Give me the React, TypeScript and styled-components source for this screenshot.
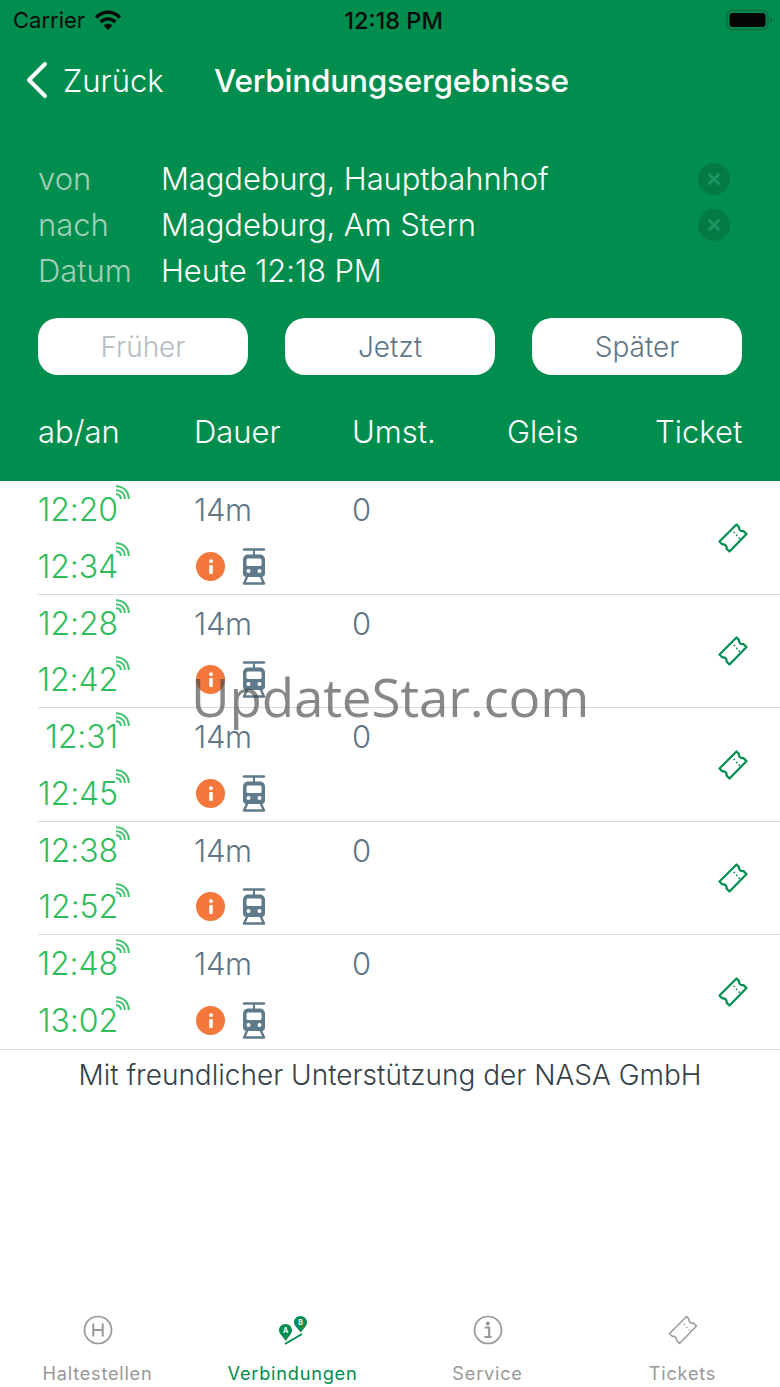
import styled, { createGlobalStyle } from "styled-components";
import { ReactNode } from "react";

const GlobalStyle = createGlobalStyle`
  html, body {
    margin: 0;
    padding: 0;
    background: #fff;
  }
  * {
    box-sizing: border-box;
  }
  body {
    font-family: Inter, "Liberation Sans", sans-serif;
  }
`;

const Page = styled.div`
  position: relative;
  width: 780px;
  height: 1387px;
  display: flex;
  flex-direction: column;
  overflow: hidden;
`;

const Header = styled.header`
  height: 481px;
  flex: none;
  background: #008e4f;
  display: flex;
  flex-direction: column;
`;

const StatusBar = styled.div`
  height: 40px;
  padding: 0 6px 0 13px;
  display: grid;
  grid-template-columns: 1fr auto 1fr;
  align-items: center;
  color: #0a0a0a;
  font-size: 22px;
`;

const StatusLeft = styled.div`
  display: flex;
  align-items: center;
  gap: 9px;
`;

const StatusTime = styled.div`
  font-weight: 500;
  font-size: 23.5px;
`;

const Battery = styled.div`
  justify-self: end;
  display: flex;
  align-items: center;
`;

const NavBar = styled.div`
  height: 80px;
  display: flex;
  align-items: center;
  padding-left: 25px;
  color: #fff;
`;

const BackLabel = styled.span`
  font-size: 31px;
  margin-left: 14px;
  width: 151px;
  font-weight: 300;
`;

const Title = styled.h1`
  margin: 0;
  font-size: 31.5px;
  font-weight: 500;
  letter-spacing: -0.2px;
`;

const SearchInfo = styled.div`
  padding: 36px 50px 0 38px;
  display: flex;
  flex-direction: column;
`;

const InfoRow = styled.div`
  height: 45.7px;
  display: flex;
  align-items: center;
  font-size: 31px;
  font-weight: 300;
  color: #fff;
`;

const InfoLabel = styled.span`
  width: 123px;
  color: #a3cfb9;
`;

const InfoValue = styled.span`
  flex: 1;
  letter-spacing: -0.1px;
`;

const ClearButton = styled.span`
  width: 32px;
  height: 32px;
  border-radius: 50%;
  background: #037a43;
  display: flex;
  align-items: center;
  justify-content: center;
`;

const ButtonRow = styled.div`
  padding: 25px 38px 0;
  display: flex;
  justify-content: space-between;
`;

const TimeButton = styled.button<{ $disabled?: boolean }>`
  width: 210px;
  height: 57px;
  border: none;
  border-radius: 20px;
  background: #fff;
  font-family: inherit;
  font-size: 28px;
  font-weight: 300;
  color: ${(p) => (p.$disabled ? "#b4bdc3" : "#5f7686")};
`;

const ColumnHeads = styled.div`
  padding: 0 38px;
  margin-top: 38px;
  display: flex;
  justify-content: space-between;
  color: #fff;
  font-size: 31px;
  font-weight: 300;
`;

const ColumnHead = styled.span<{ $w: number }>`
  width: ${(p) => p.$w}px;
  flex: none;
`;

const List = styled.div`
  border-bottom: 1px solid #d9d9d9;
`;

const Row = styled.div`
  height: 113.5px;
  margin-left: 38px;
  display: grid;
  grid-template-columns: 156px 158px 1fr 62px;
  grid-template-rows: 57px 56px;
  border-bottom: 1px solid #d9d9d9;

  &:last-child {
    border-bottom: none;
  }
`;

const TimeCell = styled.div`
  grid-column: 1;
  width: 80px;
  position: relative;
  display: flex;
  align-items: center;
  justify-content: flex-end;
  font-size: 32px;
  font-weight: 300;
  color: #2fbd5c;
  letter-spacing: -0.1px;
`;

const Live = styled.span`
  position: absolute;
  right: -12px;
  top: 4px;
  display: flex;
`;

const Duration = styled.div`
  display: flex;
  align-items: center;
  font-size: 31px;
  font-weight: 300;
  color: #5f7686;
  letter-spacing: -0.3px;
`;

const IconCell = styled.div`
  display: flex;
  align-items: center;
  padding-left: 2px;
  gap: 16px;
`;

const TicketCell = styled.div`
  grid-column: 4;
  grid-row: 1 / 3;
  display: flex;
  align-items: center;
`;

const InfoDot = styled.span`
  width: 29px;
  height: 29px;
  border-radius: 50%;
  background: #f4783c;
  display: flex;
  align-items: center;
  justify-content: center;
`;

const Credit = styled.p`
  margin: 8px 0 0;
  text-align: center;
  font-size: 28px;
  font-weight: 300;
  color: #36424a;
`;

const TabBar = styled.nav`
  margin-top: auto;
  height: 87px;
  display: grid;
  grid-template-columns: repeat(4, 1fr);
`;

const Tab = styled.div<{ $active?: boolean }>`
  display: flex;
  flex-direction: column;
  align-items: center;
  color: ${(p) => (p.$active ? "#008e4f" : "#989898")};
`;

const TabIcon = styled.div`
  height: 60px;
  margin-bottom: 2px;
  display: flex;
  align-items: center;
  justify-content: center;
`;

const TabLabel = styled.span`
  font-size: 18.2px;
  font-weight: 400;
  letter-spacing: 0.75px;
  line-height: 22px;
`;

const Watermark = styled.div`
  position: absolute;
  left: 191px;
  top: 662px;
  font-family: "Open Sans", sans-serif;
  font-size: 53px;
  line-height: 70px;
  letter-spacing: -0.2px;
  color: rgba(70, 70, 70, 0.65);
  pointer-events: none;
`;

function WifiIcon() {
  return (
    <svg width="28" height="22" viewBox="0 0 28 22" fill="none" stroke="#0a0a0a" strokeWidth="3.4">
      <path d="M2 8.5C9 1.5 19 1.500 26 8.500" />
      <path d="M6.600 13C11 8.800 17 8.800 21.400 13" />
      <path d="M14 21l-4.400-4.600c2.500-2.200 6.300-2.200 8.800 0z" fill="#0a0a0a" stroke="none" />
    </svg>
  );
}

function BatteryIcon() {
  return (
    <svg width="48" height="22" viewBox="0 0 48 22">
      <rect x="1" y="1.500" width="41" height="19" rx="5" fill="none" stroke="#0b6e3f" strokeWidth="1.600" />
      <rect x="3.500" y="4" width="36" height="14" rx="3" fill="#050505" />
      <path d="M44 8c1.600.4 2.400 1.600 2.400 3S45.600 13.600 44 14z" fill="#0b6e3f" />
    </svg>
  );
}

function BackChevron() {
  return (
    <svg width="24" height="38" viewBox="0 0 24 38" fill="none" stroke="#fff" strokeWidth="4" strokeLinecap="round" strokeLinejoin="round">
      <path d="M20 3L4 19l16 16" />
    </svg>
  );
}

function ClearIcon() {
  return (
    <svg width="14" height="14" viewBox="0 0 14 14" stroke="#1a9460" strokeWidth="3" strokeLinecap="round">
      <path d="M2.500 2.500l9 9M11.500 2.500l-9 9" />
    </svg>
  );
}

function LiveIcon() {
  return (
    <svg width="15" height="15" viewBox="0 0 15 15" fill="none" stroke="#45c46f" strokeWidth="2.100">
      <path d="M1 1.200C8.500 1.200 13.800 6.500 13.800 14" />
      <path d="M1 5.200C6.300 5.200 9.800 8.700 9.800 14" />
      <path d="M1 9.200C4 9.200 5.800 11 5.800 14" />
    </svg>
  );
}

function DotInfo() {
  return (
    <svg width="6" height="15" viewBox="0 0 6 15" fill="#fff">
      <circle cx="3" cy="2.200" r="1.900" />
      <rect x="1.200" y="6" width="3.600" height="9" rx="1" />
    </svg>
  );
}

function TramIcon() {
  return (
    <svg width="26" height="37" viewBox="0 0 26 37" fill="#5f7a8a">
      <path d="M3 1.500h20" stroke="#5f7a8a" strokeWidth="2.400" strokeLinecap="round" />
      <path d="M13 2v5" stroke="#5f7a8a" strokeWidth="2" />
      <path d="M8 6.500h10c4 0 6 2 6 5.500v13.500c0 2-1.500 3.500-3.500 3.500h-15C3.500 29 2 27.500 2 25.500V12c0-3.500 2-5.500 6-5.500z" />
      <rect x="5.500" y="10.500" width="15" height="7.500" rx="1.500" fill="#fff" />
      <circle cx="7.500" cy="23" r="2" fill="#fff" />
      <circle cx="18.500" cy="23" r="2" fill="#fff" />
      <path d="M6 29l-3 6.500M20 29l3 6.500M3 35.500h20" stroke="#5f7a8a" strokeWidth="2.400" strokeLinecap="round" fill="none" />
    </svg>
  );
}

function TicketIcon({ color, width }: { color: string; width: number }) {
  return (
    <svg width="30" height="30" viewBox="0 0 30 30" fill="none" stroke={color} strokeWidth={width} strokeLinejoin="round">
      <path d="M18.500 1.500l2.500 2.500c-.6 2.400 2 4.800 4.400 4l3.100 3.100L11.500 28.500l-3-3c.7-2.300-1.700-4.700-4-4L1.500 18.500z" />
      <path d="M15.800 9l1 1M18.300 11.800l1 1M20.800 14.600l1 1" strokeWidth={width * 0.8} />
    </svg>
  );
}

function StopIcon() {
  return (
    <svg width="30" height="30" viewBox="0 0 30 30" fill="none" stroke="#989898" strokeWidth="1.700">
      <circle cx="15" cy="15" r="13.500" />
      <path d="M10.300 8.500v13M19.700 8.500v13M10.300 15h9.400" strokeWidth="2" />
    </svg>
  );
}

function ConnectionIcon() {
  return (
    <svg width="32" height="30" viewBox="0 0 32 30">
      <path d="M8.500 9c3.600 0 6.500 2.800 6.500 6.200 0 3.900-4 6.600-6.200 10.800-2.300-4.200-6.800-6.900-6.800-10.800C2 11.800 5 9 8.500 9z" fill="#008e4f" />
      <path d="M23.500 1c3.600 0 6.500 2.800 6.500 6.200 0 3.900-4 6.600-6.200 10.300-2.300-3.700-6.800-6.400-6.800-10.300C17 3.800 20 1 23.500 1z" fill="#008e4f" />
      <path d="M8 29l17-10" stroke="#008e4f" strokeWidth="2" fill="none" />
      <text x="8.500" y="18" fontSize="7" fontWeight="700" fill="#fff" textAnchor="middle" fontFamily="Inter, sans-serif">A</text>
      <text x="23.500" y="10" fontSize="7" fontWeight="700" fill="#fff" textAnchor="middle" fontFamily="Inter, sans-serif">B</text>
    </svg>
  );
}

function ServiceIcon() {
  return (
    <svg width="30" height="30" viewBox="0 0 30 30" fill="none" stroke="#989898" strokeWidth="1.700">
      <circle cx="15" cy="15" r="13.500" />
      <circle cx="14.800" cy="8.500" r="2" fill="#989898" stroke="none" />
      <path d="M11.800 12.500h4.400v9M11.500 22h7" strokeWidth="2.200" />
    </svg>
  );
}

type Connection = { from: string; to: string };

const connections: Connection[] = [
  { from: "12:20", to: "12:34" },
  { from: "12:28", to: "12:42" },
  { from: "12:31", to: "12:45" },
  { from: "12:38", to: "12:52" },
  { from: "12:48", to: "13:02" },
];

function Time({ children }: { children: ReactNode }) {
  return (
    <TimeCell>
      {children}
      <Live>
        <LiveIcon />
      </Live>
    </TimeCell>
  );
}

export default function App() {
  return (
    <Page>
      <GlobalStyle />
      <Header>
        <StatusBar>
          <StatusLeft>
            <span>Carrier</span>
            <WifiIcon />
          </StatusLeft>
          <StatusTime>12:18 PM</StatusTime>
          <Battery>
            <BatteryIcon />
          </Battery>
        </StatusBar>
        <NavBar>
          <BackChevron />
          <BackLabel>Zurück</BackLabel>
          <Title>Verbindungsergebnisse</Title>
        </NavBar>
        <SearchInfo>
          <InfoRow>
            <InfoLabel>von</InfoLabel>
            <InfoValue>Magdeburg, Hauptbahnhof</InfoValue>
            <ClearButton>
              <ClearIcon />
            </ClearButton>
          </InfoRow>
          <InfoRow>
            <InfoLabel>nach</InfoLabel>
            <InfoValue>Magdeburg, Am Stern</InfoValue>
            <ClearButton>
              <ClearIcon />
            </ClearButton>
          </InfoRow>
          <InfoRow>
            <InfoLabel>Datum</InfoLabel>
            <InfoValue>Heute 12:18 PM</InfoValue>
          </InfoRow>
        </SearchInfo>
        <ButtonRow>
          <TimeButton $disabled>Früher</TimeButton>
          <TimeButton>Jetzt</TimeButton>
          <TimeButton>Später</TimeButton>
        </ButtonRow>
        <ColumnHeads>
          <ColumnHead $w={156}>ab/an</ColumnHead>
          <ColumnHead $w={158}>Dauer</ColumnHead>
          <ColumnHead $w={155}>Umst.</ColumnHead>
          <ColumnHead $w={148}>Gleis</ColumnHead>
          <span>Ticket</span>
        </ColumnHeads>
      </Header>
      <List>
        {connections.map((c) => (
          <Row key={c.from}>
            <Time>{c.from}</Time>
            <Duration>14m</Duration>
            <Duration>0</Duration>
            <TicketCell>
              <TicketIcon color="#008e4f" width={2.200} />
            </TicketCell>
            <Time>{c.to}</Time>
            <IconCell>
              <InfoDot>
                <DotInfo />
              </InfoDot>
              <TramIcon />
            </IconCell>
          </Row>
        ))}
      </List>
      <Credit>Mit freundlicher Unterstützung der NASA GmbH</Credit>
      <TabBar>
        <Tab>
          <TabIcon>
            <StopIcon />
          </TabIcon>
          <TabLabel>Haltestellen</TabLabel>
        </Tab>
        <Tab $active>
          <TabIcon>
            <ConnectionIcon />
          </TabIcon>
          <TabLabel>Verbindungen</TabLabel>
        </Tab>
        <Tab>
          <TabIcon>
            <ServiceIcon />
          </TabIcon>
          <TabLabel>Service</TabLabel>
        </Tab>
        <Tab>
          <TabIcon>
            <TicketIcon color="#989898" width={1.500} />
          </TabIcon>
          <TabLabel>Tickets</TabLabel>
        </Tab>
      </TabBar>
      <Watermark>UpdateStar.com</Watermark>
    </Page>
  );
}
